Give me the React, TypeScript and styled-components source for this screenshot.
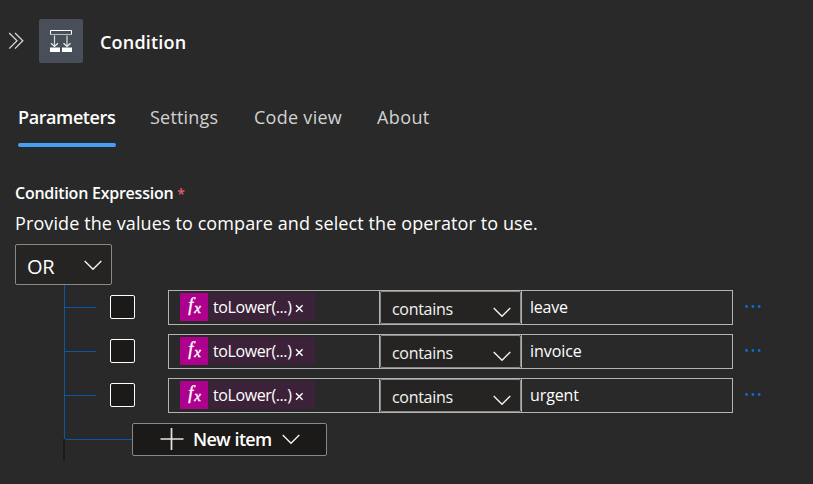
import React from 'react';
import styled, { createGlobalStyle } from 'styled-components';

const GlobalStyle = createGlobalStyle`
  * { box-sizing: border-box; }
  body {
    margin: 0;
    background: #292929;
    color: #fff;
    font-family: "Open Sans", "Noto Sans", sans-serif;
  }
`;

const Panel = styled.main`
  width: 813px;
  height: 484px;
  overflow: hidden;
  background: #292929;
`;

const Header = styled.header`
  display: flex;
  align-items: center;
  height: 44px;
  margin-top: 19px;
  padding-left: 8px;
`;

const Collapse = styled.button`
  display: flex;
  width: 31px;
  padding: 0;
  border: 0;
  background: none;
`;

const IconTile = styled.div`
  width: 44px;
  height: 44px;
  border-radius: 2px;
  background: #484f58;
`;

const Title = styled.h1`
  margin: 1px 0 0 17px;
  font-size: 18px;
  line-height: 24px;
  font-weight: 600;
  letter-spacing: 0.2px;
`;

const Tabs = styled.nav`
  display: flex;
  height: 47px;
  margin: 37px 0 0 18px;
`;

const Tab = styled.button<{ $active?: boolean; $width: number; $spacing: number }>`
  display: flex;
  flex-direction: column;
  justify-content: flex-start;
  width: ${p => p.$width}px;
  margin-right: 34px;
  padding: 5px 0 0;
  border: 0;
  border-radius: 0;
  background: none;
  color: ${p => (p.$active ? '#fff' : '#d2d2d2')};
  font: ${p => (p.$active ? 600 : 400)} 18px/24px "Open Sans", sans-serif;
  letter-spacing: ${p => p.$spacing}px;
  text-align: left;
  white-space: nowrap;
`;

const Underline = styled.span`
  width: 100%;
  height: 4px;
  margin-top: 14px;
  border-radius: 2px;
  background: #479ef5;
`;

const Label = styled.div`
  margin: 34px 0 0 15px;
  font-size: 16px;
  line-height: 24px;
  font-weight: 600;
  letter-spacing: -0.24px;
`;

const Required = styled.span`
  color: #e5606b;
  font-size: 14px;
  font-weight: 600;
  line-height: 1;
`;

const Hint = styled.p`
  margin: 6px 0 0 15px;
  font-size: 18px;
  line-height: 24px;
  letter-spacing: 0.1px;
`;

const GroupSelect = styled.button`
  display: flex;
  align-items: center;
  justify-content: space-between;
  width: 97px;
  height: 41px;
  margin: 9px 0 0 15px;
  padding: 5px 9px 0 11px;
  border: 1px solid #8a8886;
  border-radius: 2px;
  background: #252423;
  color: #fff;
  font: 400 20px/24px "Open Sans", sans-serif;
  letter-spacing: -0.2px;
`;

const Group = styled.section`
  display: flex;
  margin-left: 63px;
`;

const Trunk = styled.div`
  display: flex;
  flex-direction: column;
  align-items: center;
  width: 2px;
  &::before {
    content: "";
    width: 1px;
    height: 154px;
    margin-left: 1px;
    background: #0b57a4;
  }
  &::after {
    content: "";
    width: 2px;
    height: 22px;
    background: #1b1a19;
  }
`;

const Rows = styled.div`
  display: grid;
  grid-auto-rows: 35px;
  row-gap: 9px;
  padding-top: 5px;
`;

const Row = styled.div`
  display: flex;
  align-items: center;
`;

const Branch = styled.span<{ $length: number }>`
  width: ${p => p.$length}px;
  height: 1px;
  background: #0b57a4;
`;

const Checkbox = styled.span`
  width: 25px;
  height: 24px;
  margin: 0 33px 1px 14px;
  border: 1px solid #fff;
  border-radius: 2px;
  background: #1b1a19;
`;

const TokenField = styled.div`
  display: flex;
  align-items: flex-start;
  width: 212px;
  height: 35px;
  padding: 2px 0 0 11px;
  border: 1px solid #b3b3b1;
`;

const Token = styled.span`
  display: flex;
  align-items: center;
  width: 135px;
  height: 28px;
  background: #3c2239;
  font-size: 16px;
  line-height: 26px;
  letter-spacing: -0.4px;
`;

const FxBadge = styled.span`
  display: flex;
  justify-content: center;
  width: 28px;
  height: 28px;
  padding-left: 1px;
  margin-right: 5px;
  background: #ad008c;
  font-family: "Liberation Serif", serif;
  font-style: italic;
  font-size: 18px;
  line-height: 25px;
  letter-spacing: 0;
  -webkit-text-stroke: 0.4px #fff;
`;

const FxSub = styled.span`
  margin-left: 1px;
  font-size: 15px;
  line-height: 31px;
`;

const Dismiss = styled.span`
  display: flex;
  margin: 3px 0 0 4px;
`;

const OperatorSelect = styled.button`
  display: flex;
  align-items: center;
  width: 141px;
  height: 33px;
  padding: 2px 9px 0 11px;
  justify-content: space-between;
  border: 1px solid #8a8886;
  border-radius: 2px;
  background: #252423;
  color: #f3f2f1;
  font: 400 16px/24px "Open Sans", sans-serif;
  letter-spacing: -0.3px;
`;

const OperatorFrame = styled.div`
  display: flex;
  align-items: center;
  height: 35px;
  border: solid #b3b3b1;
  border-width: 1px 0;
`;

const ValueField = styled.div<{ $spacing: number }>`
  width: 212px;
  height: 35px;
  padding-left: 8px;
  border: 1px solid #b3b3b1;
  font-size: 16px;
  line-height: 33px;
  letter-spacing: ${p => p.$spacing}px;
`;

const More = styled.button`
  display: flex;
  margin-left: 12px;
  padding: 0 0 2px;
  border: 0;
  background: none;
`;

const NewItem = styled.button`
  display: flex;
  align-items: center;
  width: 195px;
  height: 33px;
  padding: 0 26px 1px 27px;
  border: 1px solid #8a8886;
  border-radius: 2px;
  background: #1b1a19;
  color: #fff;
  font: 600 18px/24px "Open Sans", sans-serif;
  letter-spacing: -0.7px;
  word-spacing: 0.6px;
  white-space: nowrap;
`;

const NewItemText = styled.span`
  width: 88px;
  margin-left: 9px;
  margin-right: 1px;
  text-align: left;
`;

const OperatorChevron = styled.span`
  display: flex;
  margin-top: 8px;
`;

const GroupChevron = styled.span`
  display: flex;
  margin-top: -4px;
`;

const Chevron = () => (
  <svg width="18" height="11" viewBox="0 0 18 11" fill="none" stroke="#f3f2f1" strokeWidth="1.4">
    <path d="M.7 1 9 9.3 17.3 1" />
  </svg>
);

const ConditionIcon = () => (
  <svg width="44" height="44" viewBox="0 0 44 44" fill="none">
    <path d="M11.5 11.5h21v4h-21z" stroke="#fff" />
    <path d="M11 15.5h22" stroke="#b9bcc0" />
    <path d="M15.5 16.5v10M28 16.5v10" stroke="#d9dbdd" strokeWidth="1.2" />
    <path d="m12 24.2 3.5 3.3 3.5-3.3M24.5 24.2l3.5 3.3 3.5-3.3" stroke="#f3f3f3" strokeWidth="1.2" />
    <path d="M11 28.4h10V33H11zM23 28.4h10V33H23z" fill="#fff" />
  </svg>
);

const rules = [
  { value: 'leave', spacing: -0.2 },
  { value: 'invoice', spacing: -0.05 },
  { value: 'urgent', spacing: -0.1 },
];

const tabs = [
  { name: 'Parameters', width: 98, spacing: -0.4 },
  { name: 'Settings', width: 70, spacing: 0.2 },
  { name: 'Code view', width: 89, spacing: 0.28 },
  { name: 'About', width: 54, spacing: 0.4 },
];

export default function App() {
  return (
    <Panel>
      <GlobalStyle />
      <Header>
        <Collapse aria-label="Collapse">
          <svg width="16" height="18" viewBox="0 0 16 18" fill="none" stroke="#d6d6d6" strokeWidth="1.3">
            <path d="m1.2 1 7.8 7.8-7.8 7.8M7 1l7.8 7.8L7 16.6" />
          </svg>
        </Collapse>
        <IconTile><ConditionIcon /></IconTile>
        <Title>Condition</Title>
      </Header>
      <Tabs>
        {tabs.map((t, i) => (
          <Tab key={t.name} $active={i === 0} $width={t.width} $spacing={t.spacing}>
            {t.name}
            {i === 0 && <Underline />}
          </Tab>
        ))}
      </Tabs>
      <Label>Condition Expression <Required>*</Required></Label>
      <Hint>Provide the values to compare and select the operator to use.</Hint>
      <GroupSelect>OR<GroupChevron><Chevron /></GroupChevron></GroupSelect>
      <Group>
        <Trunk />
        <Rows>
          {rules.map(r => (
            <Row key={r.value}>
              <Branch $length={31} />
              <Checkbox />
              <TokenField>
                <Token>
                  <FxBadge>f<FxSub>x</FxSub></FxBadge>
                  toLower(...)
                  <Dismiss>
                    <svg width="9" height="9" viewBox="0 0 9 9" stroke="#fff" strokeWidth="1.4">
                      <path d="m1 1.2 6.6 6.6M7.6 1.2 1 7.8" />
                    </svg>
                  </Dismiss>
                </Token>
              </TokenField>
              <OperatorFrame>
                <OperatorSelect>contains<OperatorChevron><Chevron /></OperatorChevron></OperatorSelect>
              </OperatorFrame>
              <ValueField $spacing={r.spacing}>{r.value}</ValueField>
              <More aria-label="More">
                <svg width="17" height="5" viewBox="0 0 17 5" fill="#0f6cd0">
                  <circle cx="1.6" cy="2.5" r="1.4" />
                  <circle cx="7.9" cy="2.5" r="1.4" />
                  <circle cx="14.2" cy="2.5" r="1.4" />
                </svg>
              </More>
            </Row>
          ))}
          <Row>
            <Branch $length={67} />
            <NewItem>
              <svg width="24" height="24" viewBox="0 0 24 24" stroke="#e4e4e4" strokeWidth="1.7">
                <path d="M.5 12h23M11.5 1v22" />
              </svg>
              <NewItemText>New item</NewItemText>
              <Chevron />
            </NewItem>
          </Row>
        </Rows>
      </Group>
    </Panel>
  );
}
